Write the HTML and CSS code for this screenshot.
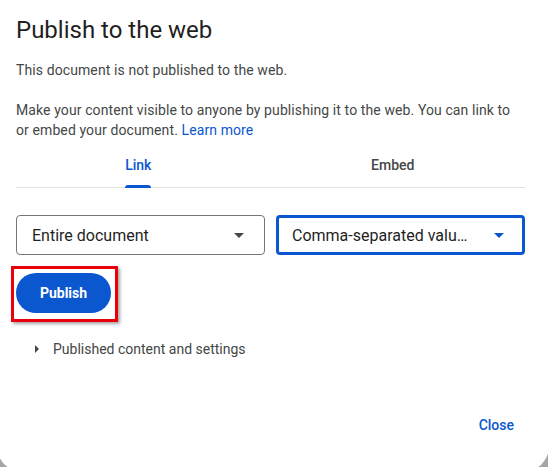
FILE: index.html
```html
<!DOCTYPE html>
<html>
<head>
<meta charset="utf-8">
<link rel="stylesheet" href="styles.css">
</head>
<body>
<div class="dialog">
  <h1 class="title">Publish to the web</h1>
  <p class="status">This document is not published to the web.</p>
  <p class="desc">Make your content visible to anyone by publishing it to the web. You can link to or embed your document. <span class="link">Learn more</span></p>
  <div class="tabs">
    <div class="tab active"><span class="tab-label">Link</span></div>
    <div class="tab"><span class="tab-label">Embed</span></div>
  </div>
  <div class="selects">
    <div class="select">
      <span class="select-text">Entire document</span>
      <span class="caret"></span>
    </div>
    <div class="select focused">
      <span class="select-text">Comma-separated valu…</span>
      <span class="caret"></span>
    </div>
  </div>
  <div class="publish-row">
    <button class="publish">Publish</button>
    <div class="highlight"></div>
  </div>
  <div class="disclosure">
    <span class="tri"></span>
    <span>Published content and settings</span>
  </div>
  <div class="footer">
    <span class="close">Close</span>
  </div>
</div>
</body>
</html>
```
FILE: styles.css
```css
html, body {
  margin: 0;
  padding: 0;
}
body {
  background: #a6a6a6;
  width: 548px;
  height: 467px;
  overflow: hidden;
  font-family: Roboto, "Liberation Sans", sans-serif;
}
.dialog {
  margin-left: -3px;
  width: 552px;
  height: 472px;
  box-sizing: border-box;
  background: #fff;
  border-radius: 0 0 26px 26px;
  padding: 14px 24px 0 19px;
  display: flex;
  flex-direction: column;
}
.title {
  margin: 0;
  font-size: 24px;
  line-height: 32px;
  font-weight: 400;
  color: #1f1f1f;
}
.status {
  margin: 14px 0 0;
  font-size: 14px;
  line-height: 20px;
  letter-spacing: 0.1px;
  color: #444746;
}
.desc {
  margin: 20px 0 0;
  font-size: 14px;
  line-height: 20px;
  letter-spacing: 0.1px;
  color: #444746;
}
.link {
  color: #0b57d0;
}
.tabs {
  margin-top: 3px;
  display: flex;
  border-bottom: 1px solid #e1e3e1;
  height: 44px;
}
.tab {
  flex: 1;
  display: flex;
  justify-content: center;
  margin-left: -5px;
  margin-right: 5px;
}
.tab-label {
  position: relative;
  display: block;
  box-sizing: border-box;
  height: 44px;
  font-size: 14px;
  font-weight: 500;
  line-height: 20px;
  padding-top: 12px;
  color: #444746;
}
.tab.active .tab-label {
  color: #0b57d0;
}
.tab.active .tab-label::after {
  content: "";
  position: absolute;
  left: 0;
  right: 0;
  bottom: -1px;
  height: 3px;
  background: #0b57d0;
  border-radius: 3px 3px 0 0;
}
.selects {
  margin-top: 27px;
  display: flex;
  gap: 11px;
}
.select {
  flex: 1;
  height: 40px;
  box-sizing: border-box;
  border: 1px solid #747775;
  border-radius: 4px;
  display: flex;
  align-items: center;
  padding: 0 20px 0 15px;
  font-size: 16px;
  color: #1f1f1f;
}
.select.focused {
  border: 3px solid #0b57d0;
  padding: 0 18px 0 13px;
}
.select-text {
  flex: 1;
}
.caret {
  width: 0;
  height: 0;
  border-left: 5px solid transparent;
  border-right: 5px solid transparent;
  border-top: 5px solid #444746;
}
.select.focused .caret {
  border-top-color: #0b57d0;
}
.publish-row {
  position: relative;
  margin-top: 18px;
  height: 40px;
}
.publish {
  width: 95px;
  height: 40px;
  border: none;
  border-radius: 20px;
  background: #0b57d0;
  color: #fff;
  font-family: Roboto, "Liberation Sans", sans-serif;
  font-size: 14px;
  font-weight: 700;
  padding: 0;
}
.highlight {
  position: absolute;
  left: -5px;
  top: -7px;
  width: 107px;
  height: 56px;
  box-sizing: border-box;
  border: 3px solid #e8000b;
  box-shadow: 2px 2px 3px rgba(0, 0, 0, 0.35);
}
.disclosure {
  margin-top: 26px;
  display: flex;
  align-items: center;
  height: 20px;
  font-size: 14px;
  color: #444746;
  padding-left: 19px;
}
.tri {
  width: 0;
  height: 0;
  border-top: 4px solid transparent;
  border-bottom: 4px solid transparent;
  border-left: 4px solid #444746;
  margin-right: 14px;
}
.footer {
  margin-top: 56px;
  display: flex;
  justify-content: flex-end;
  padding-right: 11px;
}
.close {
  font-size: 14px;
  font-weight: 500;
  line-height: 20px;
  color: #0b57d0;
}
```
